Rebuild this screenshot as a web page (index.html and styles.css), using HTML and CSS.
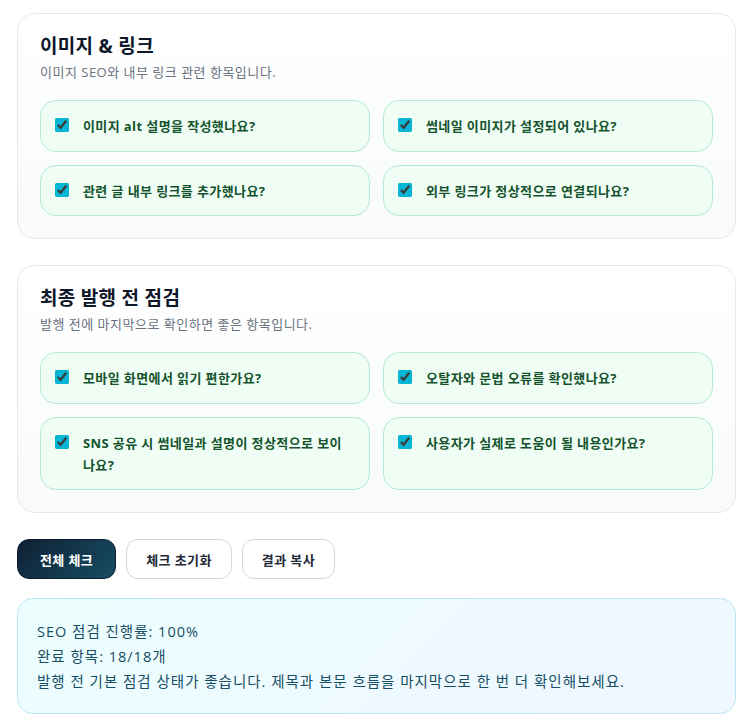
FILE: index.html
```html
<!DOCTYPE html>
<html lang="ko">
<head>
    <meta charset="UTF-8">
    <meta name="viewport" content="width=device-width, initial-scale=1.0">
    <title>SEO 점검</title>
    <link rel="stylesheet" href="styles.css">
</head>
<body>
    <div class="page">
        <section class="card">
            <h2>이미지 &amp; 링크</h2>
            <p class="desc">이미지 SEO와 내부 링크 관련 항목입니다.</p>
            <div class="items">
                <label class="item"><input type="checkbox" checked><span>이미지 alt 설명을 작성했나요?</span></label>
                <label class="item"><input type="checkbox" checked><span>썸네일 이미지가 설정되어 있나요?</span></label>
                <label class="item"><input type="checkbox" checked><span>관련 글 내부 링크를 추가했나요?</span></label>
                <label class="item"><input type="checkbox" checked><span>외부 링크가 정상적으로 연결되나요?</span></label>
            </div>
        </section>

        <section class="card">
            <h2>최종 발행 전 점검</h2>
            <p class="desc">발행 전에 마지막으로 확인하면 좋은 항목입니다.</p>
            <div class="items">
                <label class="item"><input type="checkbox" checked><span>모바일 화면에서 읽기 편한가요?</span></label>
                <label class="item"><input type="checkbox" checked><span>오탈자와 문법 오류를 확인했나요?</span></label>
                <label class="item"><input type="checkbox" checked><span>SNS 공유 시 썸네일과 설명이 정상적으로 보이나요?</span></label>
                <label class="item"><input type="checkbox" checked><span>사용자가 실제로 도움이 될 내용인가요?</span></label>
            </div>
        </section>

        <div class="actions">
            <button type="button" class="primary">전체 체크</button>
            <button type="button">체크 초기화</button>
            <button type="button">결과 복사</button>
        </div>

        <div class="result">
            <p>SEO 점검 진행률: 100%</p>
            <p>완료 항목: 18/18개</p>
            <p>발행 전 기본 점검 상태가 좋습니다. 제목과 본문 흐름을 마지막으로 한 번 더 확인해보세요.</p>
        </div>
    </div>
</body>
</html>
```

FILE: styles.css
```css
body {
    margin: 0;
    font-family: "Open Sans", "Noto Sans CJK KR", sans-serif;
    background-color: #fff;
    color: #111827;
}

.page {
    padding: 13px 20px 20px 17px;
}

.card {
    background: linear-gradient(180deg, #ffffff, #f8fafc);
    border: 1px solid #e5e7eb;
    border-radius: 18px;
    padding: 19px 22px 22px;
    margin-bottom: 26px;
}

.card h2 {
    margin: 0;
    font-size: 19px;
    line-height: 26px;
    font-weight: 700;
    letter-spacing: 0.3px;
    color: #0f172a;
}

.desc {
    margin: 4px 0 19px;
    font-size: 13px;
    line-height: 18px;
    letter-spacing: 0.5px;
    color: #6b7280;
}

.items {
    display: grid;
    grid-template-columns: 1fr 1fr;
    gap: 13px;
}

.item {
    display: flex;
    align-items: flex-start;
    gap: 14px;
    padding: 14px 16px 13.5px 14px;
    background: #effdf4;
    border: 1px solid #b4ebd3;
    border-radius: 16px;
    font-size: 13px;
    line-height: 22px;
    font-weight: 700;
    letter-spacing: 0.4px;
    color: #14532d;
}

.item input {
    margin: 3px 0 0;
    width: 14px;
    height: 14px;
    flex-shrink: 0;
    accent-color: #06b6d4;
}

.actions {
    display: flex;
    gap: 10px;
    margin-bottom: 19px;
}

.actions button {
    height: 40px;
    padding: 0 19px;
    background-color: #fff;
    border: 1px solid #d4d4dc;
    border-radius: 12px;
    font-family: inherit;
    font-size: 13px;
    font-weight: 700;
    letter-spacing: 0.4px;
    color: #1f2937;
    cursor: pointer;
}

.actions .primary {
    background: linear-gradient(135deg, #0f1f33, #164e63);
    border-color: #0f1f33;
    color: #fff;
    padding: 0 22px;
}

.result {
    background: linear-gradient(135deg, #ecfeff, #eff6ff);
    border: 1px solid #bae6f3;
    border-radius: 16px;
    padding: 20px 19px 19px;
}

.result p {
    margin: 0;
    font-size: 14.5px;
    line-height: 25px;
    letter-spacing: 1px;
    color: #164e63;
}
```
